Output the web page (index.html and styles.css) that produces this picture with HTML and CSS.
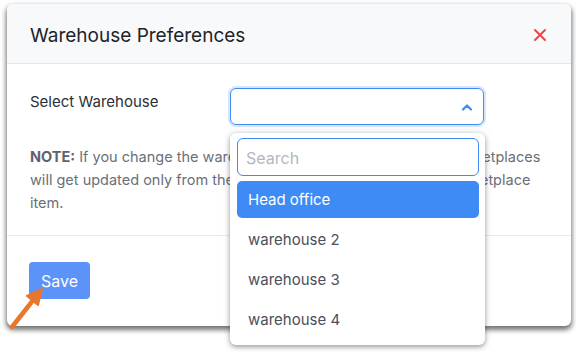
FILE: index.html
```html
<!DOCTYPE html>
<html lang="en">
<head>
    <meta charset="UTF-8">
    <title>Warehouse Preferences</title>
    <link rel="stylesheet" href="styles.css">
</head>
<body>
    <div class="modal">
        <!-- HEADER -->
        <div class="modal-header">
            <h1>Warehouse Preferences</h1>
            <svg class="close-btn" width="14" height="14" viewBox="0 0 14 14"><path d="M2 2 L12 12 M12 2 L2 12" stroke="#f0464a" stroke-width="2" stroke-linecap="round"/></svg>
        </div>

        <!-- BODY -->
        <div class="modal-body">
            <div class="field-row">
                <label>Select Warehouse</label>
                <div class="select-wrap">
                    <div class="select-box">
                        <svg class="chevron" width="12" height="8" viewBox="0 0 12 8"><path d="M2 6.5 L6 2.5 L10 6.5" fill="none" stroke="#3e8bf6" stroke-width="2.2" stroke-linecap="round" stroke-linejoin="round"/></svg>
                    </div>
                    <div class="dropdown">
                        <div class="search-input">Search</div>
                        <div class="option active">Head office</div>
                        <div class="option">warehouse 2</div>
                        <div class="option">warehouse 3</div>
                        <div class="option">warehouse 4</div>
                    </div>
                </div>
            </div>
            <p class="note"><b>NOTE:</b> If you change the warehouse, the stock of items in all marketplaces will get updated only from the selected warehouse for every marketplace item.</p>
        </div>

        <!-- FOOTER -->
        <div class="modal-footer">
            <button class="save-btn">Save</button>
        </div>

        <svg class="pointer" width="40" height="46" viewBox="0 0 40 46">
            <path d="M4 42 L26 14" stroke="#e8762d" stroke-width="4.5" stroke-linecap="round"/>
            <path d="M34 4 L19 11 L30 20 Z" fill="#e8762d" stroke="#e8762d" stroke-width="2" stroke-linejoin="round"/>
        </svg>
    </div>
</body>
</html>
```

FILE: styles.css
```css
* { box-sizing: border-box; margin: 0; padding: 0; }

body {
    font-family: Inter, "Open Sans", sans-serif;
    background: #ffffff;
    width: 576px;
    height: 352px;
    overflow: hidden;
    padding: 4px 0 0 7px;
}

.modal {
    position: relative;
    width: 564px;
    height: 322px;
    background: #ffffff;
    border-radius: 6px;
    box-shadow: 0 3px 5px 1px rgba(0, 0, 0, 0.55);
}

.modal-header {
    height: 60px;
    background: #f8f9fb;
    border-bottom: 1px solid #e4e6ea;
    border-radius: 6px 6px 0 0;
    display: flex;
    align-items: center;
    justify-content: space-between;
    padding: 0 24px 0 23px;
}

.modal-header h1 {
    font-size: 19px;
    font-weight: 400;
    color: #1f2328;
    padding-top: 4px;
}

.close-btn { margin-top: 2px; }

.modal-body {
    padding: 24px 23px 0 23px;
    height: 172px;
    border-bottom: 1px solid #e8eaee;
}

.field-row {
    display: flex;
    align-items: flex-start;
}

.field-row label {
    width: 200px;
    font-size: 15px;
    color: #2b2f36;
    padding-top: 4px;
}

.select-wrap {
    position: relative;
    width: 254px;
}

.select-box {
    height: 37px;
    border: 1px solid #3e8bf6;
    border-radius: 6px;
    box-shadow: 0 0 0 2px #d6e6fd;
    display: flex;
    align-items: center;
    justify-content: flex-end;
    padding-right: 10px;
}

.dropdown {
    position: absolute;
    top: 45px;
    left: 0;
    width: 255px;
    background: #ffffff;
    border-radius: 6px;
    padding: 5px 6px 7px 7px;
    box-shadow: 0 2px 5px rgba(0, 0, 0, 0.35), 0 0 8px rgba(120, 130, 160, 0.2);
    display: flex;
    flex-direction: column;
    gap: 3px;
    z-index: 2;
}

.search-input {
    height: 38px;
    border: 1px solid #3e8bf6;
    border-radius: 6px;
    font-size: 16px;
    color: #b3b7bf;
    padding: 9px 8px;
    margin-bottom: 2px;
}

.option {
    height: 37px;
    font-size: 15px;
    color: #4a4f5a;
    padding: 0 11px;
    display: flex;
    align-items: center;
}

.option.active {
    background: #3e8bf6;
    color: #ffffff;
    border-radius: 5px;
}

.note {
    margin-top: 20px;
    font-size: 14.5px;
    line-height: 23px;
    color: #6b6f79;
    width: 514px;
}

.note b { color: #5f636d; }

.modal-footer {
    padding: 26px 22px;
}

.save-btn {
    width: 61px;
    height: 37px;
    background: #5b93f8;
    color: #ffffff;
    border: none;
    border-radius: 4px;
    font-family: inherit;
    font-size: 16px;
}

.pointer {
    position: absolute;
    left: 1px;
    top: 281px;
}
```
